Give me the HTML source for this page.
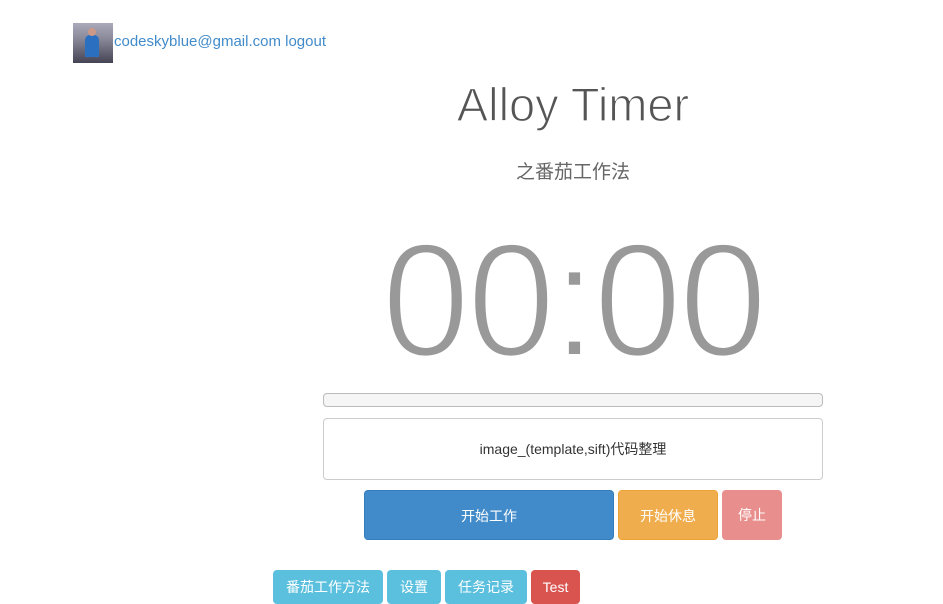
<!DOCTYPE html>
<html><head><meta charset="utf-8"><style>
body{margin:0;width:943px;height:591px;overflow:hidden;background:#fff;font-family:"Liberation Sans","Noto Sans CJK SC",sans-serif;position:relative}
.a{position:absolute}
.btn{position:absolute;color:#fff;font-size:14px;text-align:center;border-radius:4px;box-sizing:border-box}
</style></head><body>
<div class="a" style="left:73px;top:23px;width:40px;height:40px;background:linear-gradient(#aab 0,#889 40%,#445 100%)"><div style="position:absolute;left:12px;top:12px;width:14px;height:22px;background:#2a6fc0;border-radius:5px 5px 0 0"></div><div style="position:absolute;left:15px;top:5px;width:8px;height:8px;background:#c98;border-radius:50%"></div></div>
<div class="a" style="left:114px;top:33px;font-size:15px;color:#428bca">codeskyblue@gmail.com logout</div>
<div class="a" style="left:323px;width:500px;top:77px;text-align:center;font-size:47px;color:#555;-webkit-text-stroke:1.2px #fff">Alloy Timer</div>
<div class="a" style="left:323px;width:500px;top:157px;text-align:center;font-size:19px;color:#666">之番茄工作法</div>
<div class="a" style="left:323px;width:500px;top:206px;text-align:center;font-size:162px;line-height:190px;color:#999;-webkit-text-stroke:4px #fff;letter-spacing:-3px;transform:scaleX(0.98)">00:00</div>
<div class="a" style="left:323px;top:393px;width:500px;height:14px;box-sizing:border-box;border:1px solid #bbb;border-radius:4px;background:#f5f5f5"></div>
<div class="a" style="left:323px;top:418px;width:500px;height:62px;box-sizing:border-box;border:1px solid #ccc;border-radius:4px;text-align:center;line-height:60px;font-size:14px;color:#333">image_(template,sift)代码整理</div>
<div class="btn" style="left:364px;top:490px;width:250px;height:50px;line-height:50px;background:#428bca;border:1px solid #357ebd">开始工作</div>
<div class="btn" style="left:618px;top:490px;width:100px;height:50px;line-height:50px;background:#f0ad4e;border:1px solid #eea236">开始休息</div>
<div class="btn" style="left:722px;top:490px;width:60px;height:50px;line-height:50px;background:#e88f8d">停止</div>
<div class="btn" style="left:273px;top:570px;width:110px;height:34px;line-height:34px;background:#5bc0de">番茄工作方法</div>
<div class="btn" style="left:387px;top:570px;width:54px;height:34px;line-height:34px;background:#5bc0de">设置</div>
<div class="btn" style="left:445px;top:570px;width:82px;height:34px;line-height:34px;background:#5bc0de">任务记录</div>
<div class="btn" style="left:531px;top:570px;width:49px;height:34px;line-height:34px;background:#d9534f">Test</div>
</body></html>
